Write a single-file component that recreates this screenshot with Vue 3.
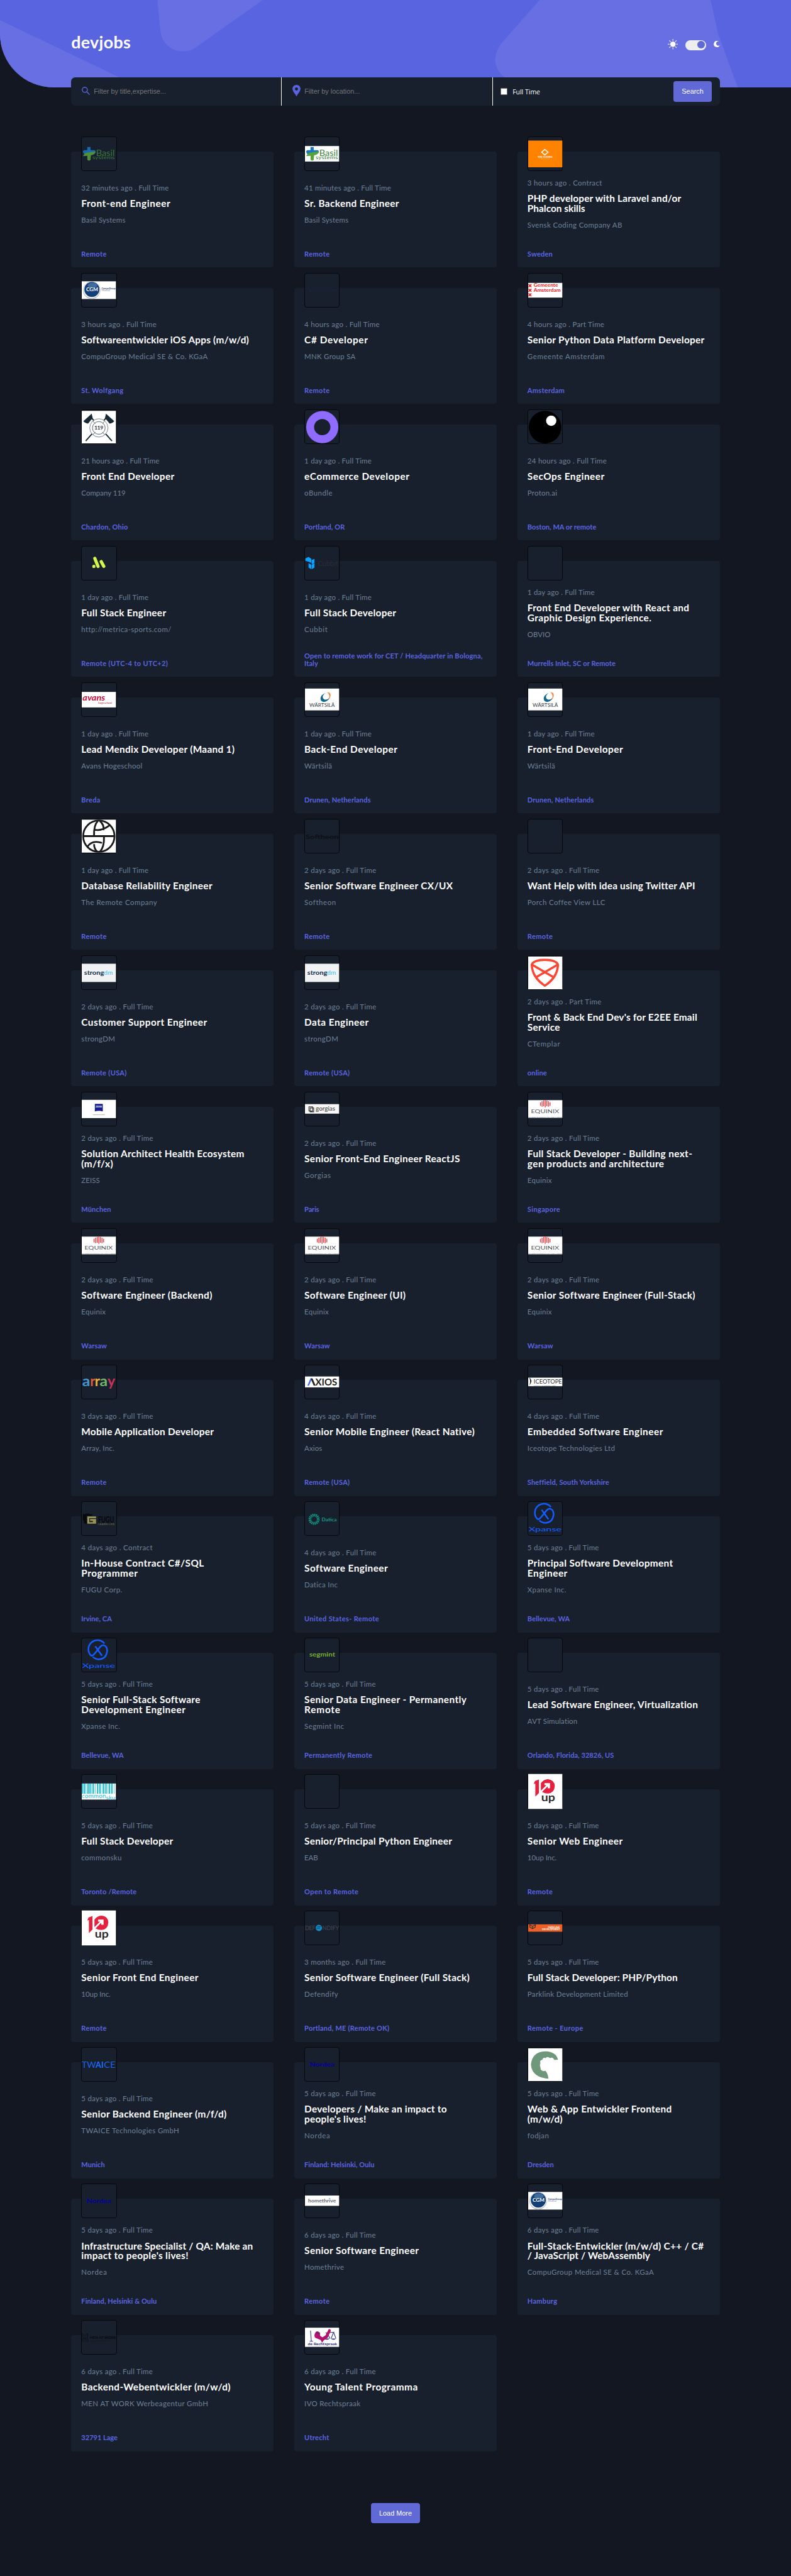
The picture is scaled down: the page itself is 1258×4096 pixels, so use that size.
<script setup>
// Short helpers for the company marks; every mark lives on an 86 x 84 canvas.
const t = (s, x, y, size, w, fill, extra = '') =>
  `<text x="${x}" y="${y}" font-size="${size}" textLength="${w}" lengthAdjust="spacingAndGlyphs" fill="${fill}" ${extra}>${s}</text>`
const r = (y1, y2, fill = '#fff') => `<rect x="0" y="${y1}" width="86" height="${y2 - y1}" fill="${fill}"/>`
const B = 'font-weight="700"'

const basil =
  `<path d="M14 25h8v8h10q3 0 3 4t-3 4H22L8 44q-5-3-5-7 0-3 3-4h8z" fill="#1878c2"/>` +
  `<path d="M3 48q4-9 14-9l17-3q1 8-11 10l-1 12q-4 3-8-1v-10z" fill="#5aa33c"/>` +
  t('Basil', 36, 47, 20, 47, '#3f8442') + t('systems', 27, 56, 12, 56, '#3f8442')
const nordea = t('Nordea', 12, 48, 16, 62, '#0000a0', B)
const strong =
  r(19.6, 65.6, '#f1f2f3') + t('strong', 6, 47, 14, 50, '#0c2f4c', B) + t('dm', 56, 47, 14, 22, '#38bdf0')

const logos = {
  none: '',
  basilDark: `<g opacity=".85">${basil}</g>`,
  basil: r(22.5, 61.5) + basil,
  coding:
    r(8.7, 76, '#ff8200') +
    `<path d="M42 31l8 7-8 7-8-7z" fill="none" stroke="#fff" stroke-width="2.4"/>` +
    t('THE CODING', 24, 51.5, 6, 37, '#fff', B) + t('COMPANY', 32, 55, 2.6, 22, '#ffe2c2'),
  cgm:
    r(19.5, 64) +
    `<circle cx="25" cy="42" r="22" fill="#b9bec4"/><circle cx="25" cy="41" r="20.5" fill="#fff"/><circle cx="25.5" cy="40" r="19" fill="#123f77"/><ellipse cx="27" cy="30" rx="12" ry="7" fill="#5d8ab8" opacity=".6"/>` +
    t('CGM', 11, 44, 11, 30, '#fff', B) + t('CompuGroup', 50, 40, 5.5, 35, '#2c4a78', B) + t('Medical', 50, 45, 5, 21, '#8b939c'),
  mnk: `<path d="M9 38l6 5-6 5" fill="none" stroke="#17294a" stroke-width="1.5"/>` + t('MNK GROUP', 19, 44, 7, 63, '#15233e', B),
  amsterdam:
    r(23.5, 60.5) +
    `<path d="M1 27l7 7m0-7l-7 7M1 38.5l7 7m0-7l-7 7M1 50l7 7m0-7l-7 7" stroke="#ec1c24" stroke-width="2.6"/>` +
    t('Gemeente', 14, 34, 10.5, 61, '#ec1c24', B) + t('Amsterdam', 14, 46, 10.5, 68, '#ec1c24', B),
  axes:
    r(2, 84) +
    `<path d="M23 18L76 78M63 18L10 78" stroke="#172a33" stroke-width="3"/><path d="M25 9L4 28q6 6 12 6l8-10 4-2zM61 9l21 19q-6 6-12 6l-8-10-4-2z" fill="#172a33"/>` +
    `<circle cx="43" cy="45" r="23" fill="#fff" stroke="#555f66" stroke-width="1.2"/><circle cx="43" cy="45" r="16" fill="none" stroke="#555f66" stroke-width="1.5"/><path d="M28 28l6 6m24-6l-6 6M28 62l6-6m24 6l-6-6" stroke="#555f66" stroke-width="1.5"/>` +
    t('119', 32, 49.5, 12, 22, '#172a33', B),
  obundle: `<circle cx="43.5" cy="43" r="30.5" fill="none" stroke="#8f6bff" stroke-width="20"/>`,
  proton: `<circle cx="42.5" cy="43" r="41"/><circle cx="58" cy="27" r="13" fill="#fff"/>`,
  metrica: `<path d="M30.5 50v.1M33 30l8 20M49 38l6.500 12" stroke="#d3f84b" stroke-width="8" stroke-linecap="round"/>`,
  cubbit:
    `<path d="M1 30l8-4 7 5v10l-8-3-7-2zM17 34l7-3v10l-7 4zM9 42l7 4v11l-7-4zM17 46l7-4v11l-7 4z" fill="#0aa0ff"/>` +
    t('Cubbit', 32, 49, 18, 52, '#292c34'),
  avans: r(22.5, 61.5) + t('avans', 2, 44, 21, 57, '#c8103e', B + ' font-style="italic"') + t('hogeschool', 41, 52, 7, 35, '#c8103e', 'font-style="italic"'),
  wartsila:
    r(14, 69) +
    `<path d="M52 25q-12 5-13 14 1 11 12 8 8-2 11-10-5 6-12 5-6-2-5-9 2-5 7-8z" fill="#13668c"/><path d="M56 24q10-2 8 10-1 5-5 9 4-10 1-15-1-3-4-4z" fill="#f58345"/>` +
    t('WÄRTSILÄ', 11, 60.5, 13, 64, '#35393d'),
  globe:
    r(0.5, 83.5) +
    `<g fill="none" stroke="#1a1a1a" stroke-width="4.5"><circle cx="43" cy="42" r="39.5"/><path d="M3 42h80M31 40q-1-25 10-37M45 3q13 12 9 24M30 25q19 6 40-10M56 44q1 25-10 37M31 62q0 12 8 19M15 68q11-17 36-9"/></g>`,
  softheon: t('Softheon', 1, 49, 16, 84, '#0c1118', 'font-weight="900"'),
  strong,
  ctemplar:
    r(1.5, 84) +
    `<path d="M9 22Q14 10 42 10Q70 10 75 22Q74 54 42 75Q10 54 9 22zM10 22L63 53M74 22L21 53" fill="none" stroke="#fa4632" stroke-width="5.5" stroke-linejoin="round"/>`,
  zeiss:
    r(18.7, 64.7) + `<path d="M33 29h20v19q-10-3-20 0z" fill="#141e8c"/>` + t('ZEISS', 35, 38, 5, 16, '#fff', B) + t('Seeing beyond', 28, 57, 4, 30, '#555'),
  gorgias:
    r(29.5, 53.5, '#f7f7f7') +
    `<path d="M10 36h9v11h-9zM13 39h9v10h-9z" fill="none" stroke="#333" stroke-width="1.8"/>` + t('gorgias', 27, 46, 15, 49, '#333'),
  equinix:
    r(19.5, 64) +
    `<path d="M31 25v9M35 22v14M39 20v15M43 19.5v18M47 20v15M51 22v14M55 25v9" stroke="#ed3b3f" stroke-width="2.2"/>` +
    t('EQUINIX', 7, 53, 10.5, 71, '#4e5256') + t('WHERE OPPORTUNITY CONNECTS', 0, 63.5, 3.8, 86, '#777'),
  array:
    t('a', 1, 52, 35, 20, '#4795d2', B) + t('r', 21, 52, 35, 13, '#dd5a3c', B) + t('r', 33, 52, 35, 13, '#edb63b', B) +
    t('a', 45, 52, 35, 20, '#6fb76b', B) + t('y', 65, 52, 35, 19, '#c9325c', B),
  axios: r(28, 55.5) + `<path d="M6 51l8-18h4l-8 18z" fill="#3a6bf0"/><path d="M14 33h5l8 18h-5z" fill="#222"/>` + t('XIOS', 26, 51, 24, 55, '#222', B),
  iceotope:
    r(31, 52.5) + `<path d="M3 31q6 5 5 10t-5 9q2-5 2-9t-2-10z" fill="#222"/>` + t('ICEOTOPE', 14, 46.5, 15, 71, '#333') + t('COOLING REDEFINED', 14, 51.5, 3.8, 55, '#777'),
  fugu:
    `<path d="M3 30l6 2 1-4 4 3 3-3 3 4 6-2v5H12v22l-4-3-3 1 1-6-3-3z" fill="#07090c"/><path d="M14 37h22v4H19v10h9v-3h-7v-5h15v12H14z" fill="#9d9350"/>` +
    t('FUGU', 41, 52, 20, 40, '#07090c', 'font-weight="900"') + t('LEARN LIFE', 41, 59, 4.8, 42, '#777044'),
  datica:
    `<circle cx="23" cy="44" r="10.5" fill="none" stroke="#109a84" stroke-width="7" stroke-dasharray="2.6 1.5"/>` + t('Datica', 42, 48.5, 12, 38, '#109a84', B),
  xpanse:
    `<g fill="none" stroke="#145cff" stroke-width="4"><path d="M57 13A22.5 22.500 0 0 0 22 42Q26 47 33 38L46 22Q51 16 57 18 64 21 64 32 62 52 44 53 34 53 28 47M34 20L51 44"/></g>` +
    t('Xpanse', 1, 75, 14, 83, '#145cff', 'font-weight="500"'),
  segmint: t('segmint', 11, 46, 16, 65, '#79ad35', B),
  commonsku:
    r(22, 62.5) +
    `<path d="M2 22v26M7 22v26M16 22v26M21 22v26M29 22v26M40 22v26M46 22v26M55 22v26M61 22v26M70 22v26M76 22v26" stroke="#25bccf" stroke-width="3.5"/><path d="M11 22v26M25 22v26M34 22v26M51 22v26M66 22v26M82 22v26" stroke="#4fd0de" stroke-width="1.5"/>` +
    t('common', 0, 58.5, 14, 61, '#25bccf') + t('sku', 61, 62, 13, 24, '#25bccf'),
  tenup:
    r(-2, 86) +
    `<path d="M17 16l10-4v34l-9 9V22l-4 1z" fill="#e6203f"/><path d="M32 21q8-10 18-10 16 2 17 17-1 18-17 19-9 0-15-4l14-14v5h6V21H41v5h5L32 40z" fill="#e6203f"/>` +
    t('up', 33, 66, 27, 35, '#2a2a2c', B),
  defendify: `<circle cx="35" cy="42" r="8" fill="#138cc4"/>` + t('DEF', 0, 48, 15, 26, '#444a54') + t('NDIFY', 44, 48, 15, 42, '#444a54') + `<path d="M31 39h9M29 43h9" stroke="#0b4a74" stroke-width="2"/>`,
  parklink:
    r(33, 51.5, '#ee6128') + `<path d="M4 34v6l7 4 7-4v-6l-7 4zM11 38v6" fill="none" stroke="#43312d" stroke-width="2"/>` +
    t('PARKLINK', 50, 42, 6, 30, '#fff', B) + t('DEVELOPMENT', 35, 47.5, 6, 45, '#fff', B),
  twaice: t('TW', 0, 50, 22, 36, '#1b63e8') + t('AI', 35, 50, 22, 20, '#1b70ff', B) + t('CE', 56, 50, 22, 29, '#1b63e8'),
  nordea,
  fodjan:
    r(1.5, 84) +
    `<path d="M43 9q28 1 32 21l-9 1q-4-9-11-5-7-5-11 0-7-2-8 4-8 2-5 9-3 6 0 10-1 7 4 9 5 2 8 0 7 7 8 20Q45 78 33 75 8 66 7 42 10 10 43 9z" fill="#6f987b"/>`,
  homethrive: r(28.5, 54.5) + t('homethrive', 8, 45.5, 13, 70, '#666a70', B) + `<path d="M60 37l2-2 2 2" stroke="#3a9fd8" fill="none"/>`,
  menatwork:
    `<path d="M1 53V32l7 8 7-8v21M5 53V42l3 4 3-4v11" fill="none" stroke="#0b0e13" stroke-width="1.2"/>` + t('MEN AT WORK', 20, 46, 9.5, 66, '#07090d', B) + t('WERBEAGENTUR', 21, 53, 4, 50, '#0e1219'),
  rechtspraak:
    r(17.7, 66) +
    `<path d="M14 25l2 26M12 52h8M52 31l22-2M56 31l-7 14M56 31l7 14M72 29l-6 16M72 29l6 16" stroke="#2d3180" stroke-width="1.7" fill="none"/><path d="M48 45h14q-6 6-14 0zM65 45h13q-6 6-13 0z" fill="#2d3180"/>` +
    `<path d="M60 21q5 0 5 5l-2 4-6 13-10 7-4 6-3-7-9-4q-8-1-7-9 2-10 8-9 7 2 6 11l6 4 8-5 6-12z" fill="#b5126e"/><path d="M28 31h10" stroke="#2d3180" stroke-width="2"/>` +
    t('de Rechtspraak', 7, 62, 9.5, 74, '#2d3180', B),
}

// logo, age, type, title, company, place, then the set widths of meta, title lines, company, place lines
const rows = [
  ['basilDark', '32 minutes ago', 'Full Time', 'Front-end Engineer', 'Basil Systems', 'Remote', 213, [216], 107, [61]],
  ['basil', '41 minutes ago', 'Full Time', 'Sr. Backend Engineer', 'Basil Systems', 'Remote', 211, [230], 107, [61]],
  ['coding', '3 hours ago', 'Contract', 'PHP developer with Laravel and/or\nPhalcon skills', 'Svensk Coding Company AB', 'Sweden', 181, [375, 140], 231, [61]],
  ['cgm', '3 hours ago', 'Full Time', 'Softwareentwickler iOS Apps (m/w/d)', 'CompuGroup Medical SE & Co. KGaA', 'St. Wolfgang', 183, [408], 307, [102]],
  ['mnk', '4 hours ago', 'Full Time', 'C# Developer', 'MNK Group SA', 'Remote', 183, [154], 124, [61]],
  ['amsterdam', '4 hours ago', 'Part Time', 'Senior Python Data Platform Developer', 'Gemeente Amsterdam', 'Amsterdam', 187, [430], 188, [90]],
  ['axes', '21 hours ago', 'Full Time', 'Front End Developer', 'Company 119', 'Chardon, Ohio', 190, [226], 108, [113]],
  ['obundle', '1 day ago', 'Full Time', 'eCommerce Developer', 'oBundle', 'Portland, OR', 164, [255], 68, [98]],
  ['proton', '24 hours ago', 'Full Time', 'SecOps Engineer', 'Proton.ai', 'Boston, MA or remote', 193, [187], 72, [168]],
  ['metrica', '1 day ago', 'Full Time', 'Full Stack Engineer', 'http://metrica-sports.com/', 'Remote (UTC-4 to UTC+2)', 164, [206], 218, [210]],
  ['cubbit', '1 day ago', 'Full Time', 'Full Stack Developer', 'Cubbit', 'Open to remote work for CET / Headquarter in Bologna,\nItaly', 164, [223], 56, [434, 33]],
  ['none', '1 day ago', 'Full Time', 'Front End Developer with React and\nGraphic Design Experience.', 'OBVIO', 'Murrells Inlet, SC or Remote', 164, [394, 301], 56, [214]],
  ['avans', '1 day ago', 'Full Time', 'Lead Mendix Developer (Maand 1)', 'Avans Hogeschool', 'Breda', 164, [373], 148, [46]],
  ['wartsila', '1 day ago', 'Full Time', 'Back-End Developer', 'Wärtsilä', 'Drunen, Netherlands', 164, [226], 67, [161]],
  ['wartsila', '1 day ago', 'Full Time', 'Front-End Developer', 'Wärtsilä', 'Drunen, Netherlands', 164, [232], 67, [161]],
  ['globe', '1 day ago', 'Full Time', 'Database Reliability Engineer', 'The Remote Company', 'Remote', 164, [319], 184, [61]],
  ['softheon', '2 days ago', 'Full Time', 'Senior Software Engineer CX/UX', 'Softheon', 'Remote', 175, [361], 76, [61]],
  ['none', '2 days ago', 'Full Time', 'Want Help with idea using Twitter API', 'Porch Coffee View LLC', 'Remote', 175, [409], 189, [61]],
  ['strong', '2 days ago', 'Full Time', 'Customer Support Engineer', 'strongDM', 'Remote (USA)', 175, [306], 82, [110]],
  ['strong', '2 days ago', 'Full Time', 'Data Engineer', 'strongDM', 'Remote (USA)', 175, [156], 82, [110]],
  ['ctemplar', '2 days ago', 'Part Time', "Front & Back End Dev's for E2EE Email\nService", 'CTemplar', 'online', 180, [413, 79], 79, [47]],
  ['zeiss', '2 days ago', 'Full Time', 'Solution Architect Health Ecosystem\n(m/f/x)', 'ZEISS', 'München', 175, [397, 77], 45, [72]],
  ['gorgias', '2 days ago', 'Full Time', 'Senior Front-End Engineer ReactJS', 'Gorgias', 'Paris', 175, [379], 64, [36]],
  ['equinix', '2 days ago', 'Full Time', 'Full Stack Developer - Building next-\ngen products and architecture', 'Equinix', 'Singapore', 175, [401, 332], 59, [79]],
  ['equinix', '2 days ago', 'Full Time', 'Software Engineer (Backend)', 'Equinix', 'Warsaw', 175, [318], 59, [62]],
  ['equinix', '2 days ago', 'Full Time', 'Software Engineer (UI)', 'Equinix', 'Warsaw', 175, [246], 59, [62]],
  ['equinix', '2 days ago', 'Full Time', 'Senior Software Engineer (Full-Stack)', 'Equinix', 'Warsaw', 175, [408], 59, [62]],
  ['array', '3 days ago', 'Full Time', 'Mobile Application Developer', 'Array, Inc.', 'Remote', 175, [323], 80, [61]],
  ['axios', '4 days ago', 'Full Time', 'Senior Mobile Engineer (React Native)', 'Axios', 'Remote (USA)', 175, [415], 43, [110]],
  ['iceotope', '4 days ago', 'Full Time', 'Embedded Software Engineer', 'Iceotope Technologies Ltd', 'Sheffield, South Yorkshire', 175, [329], 213, [198]],
  ['fugu', '4 days ago', 'Contract', 'In-House Contract C#/SQL\nProgrammer', 'FUGU Corp.', 'Irvine, CA', 173, [298, 137], 99, [74]],
  ['datica', '4 days ago', 'Full Time', 'Software Engineer', 'Datica Inc', 'United States- Remote', 175, [202], 81, [181]],
  ['xpanse', '5 days ago', 'Full Time', 'Principal Software Development\nEngineer', 'Xpanse Inc.', 'Bellevue, WA', 174, [353, 97], 94, [103]],
  ['xpanse', '5 days ago', 'Full Time', 'Senior Full-Stack Software\nDevelopment Engineer', 'Xpanse Inc.', 'Bellevue, WA', 174, [289, 253], 94, [103]],
  ['segmint', '5 days ago', 'Full Time', 'Senior Data Engineer - Permanently\nRemote', 'Segmint Inc', 'Permanently Remote', 174, [395, 87], 96, [165]],
  ['none', '5 days ago', 'Full Time', 'Lead Software Engineer, Virtualization', 'AVT Simulation', 'Orlando, Florida, 32826, US', 174, [415], 122, [210]],
  ['commonsku', '5 days ago', 'Full Time', 'Full Stack Developer', 'commonsku', 'Toronto /Remote', 174, [223], 98, [134]],
  ['none', '5 days ago', 'Full Time', 'Senior/Principal Python Engineer', 'EAB', 'Open to Remote', 174, [359], 33, [131]],
  ['tenup', '5 days ago', 'Full Time', 'Senior Web Engineer', '10up Inc.', 'Remote', 174, [232], 71, [61]],
  ['tenup', '5 days ago', 'Full Time', 'Senior Front End Engineer', '10up Inc.', 'Remote', 174, [285], 71, [61]],
  ['defendify', '3 months ago', 'Full Time', 'Senior Software Engineer (Full Stack)', 'Defendify', 'Portland, ME (Remote OK)', 198, [402], 82, [206]],
  ['parklink', '5 days ago', 'Full Time', 'Full Stack Developer: PHP/Python', 'Parklink Development Limited', 'Remote - Europe', 174, [365], 244, [135]],
  ['twaice', '5 days ago', 'Full Time', 'Senior Backend Engineer (m/f/d)', 'TWAICE Technologies GmbH', 'Munich', 174, [354], 238, [57]],
  ['nordea', '5 days ago', 'Full Time', "Developers / Make an impact to\npeople's lives!", 'Nordea', 'Finland: Helsinki, Oulu', 174, [346, 150], 62, [170]],
  ['fodjan', '5 days ago', 'Full Time', 'Web & App Entwickler Frontend\n(m/w/d)', 'fodjan', 'Dresden', 174, [352, 85], 52, [64]],
  ['nordea', '5 days ago', 'Full Time', "Infrastructure Specialist / QA: Make an\nimpact to people's lives!", 'Nordea', 'Finland, Helsinki & Oulu', 174, [417, 260], 62, [183]],
  ['homethrive', '6 days ago', 'Full Time', 'Senior Software Engineer', 'Homethrive', 'Remote', 174, [278], 96, [61]],
  ['cgm', '6 days ago', 'Full Time', 'Full-Stack-Entwickler (m/w/d) C++ / C#\n/ JavaScript / WebAssembly', 'CompuGroup Medical SE & Co. KGaA', 'Hamburg', 174, [429, 299], 307, [72]],
  ['menatwork', '6 days ago', 'Full Time', 'Backend-Webentwickler (m/w/d)', 'MEN AT WORK Werbeagentur GmbH', '32791 Lage', 174, [363], 310, [88]],
  ['rechtspraak', '6 days ago', 'Full Time', 'Young Talent Programma', 'IVO Rechtspraak', 'Utrecht', 174, [276], 136, [60]],
]

// Tracks a line of text so that it sets to the given width (design pixels).
const ctx = document.createElement('canvas').getContext('2d')
function line(text, width, size, weight) {
  ctx.font = `${weight} 100px Lato, "Open Sans", sans-serif`
  const natural = (ctx.measureText(text).width * size) / 100
  const gap = (width - natural) / (text.length - 1)
  return { text, style: { letterSpacing: `${(gap / 10).toFixed(4)}rem` } }
}
const lines = (text, widths, size, weight) => text.split('\n').map((s, i) => line(s, widths[i], size, weight))

const jobs = rows.map(([logo, age, type, title, company, place, mw, tw, cw, pw]) => ({
  logo,
  meta: line(`${age} . ${type}`, mw, 17.5, 400),
  title: lines(title, tw, 23.5, 700),
  company: line(company, cw, 17.5, 400),
  place: lines(place, pw, 16.8, 700),
}))
</script>

<template>
  <div class="page">
    <header class="header">
      <svg class="shapes" viewBox="0 0 1920 213" preserveAspectRatio="none">
        <path d="M0 49L342 213H0z" />
        <path d="M382 0L389 72C391 103 415 125 443 125C458 125 468 121 477 114L638 0z" />
        <path d="M1310 0L1218 104C1196 132 1196 166 1224 187L1250 213H1791L1743 82L1725 0z" />
      </svg>
      <div class="bar">
        <h1 class="brand">devjobs</h1>
        <div class="theme">
          <svg class="sun" viewBox="0 0 24 24">
            <circle cx="12" cy="12" r="6.2" fill="#fff" />
            <path d="M12 .5v3.200M12 20.300v3.200M.5 12h3.200M20.300 12h3.200M4 4l2.100 2.100M17.900 17.900L20 20M4 20l2.100-2.100M17.900 6.100L20 4" stroke="#fff" stroke-width="1.5" stroke-linecap="round" />
          </svg>
          <span class="toggle"><i></i></span>
          <svg class="moon" viewBox="0 0 15 15">
            <path d="M9.500.2A7.500 7.500 0 1 0 14.800 10.500Q11 13 8 10.500 4.500 7 7 3 8.500 1.200 12.500 1.200 11.500.2 9.500.2z" fill="#fff" />
          </svg>
        </div>
      </div>
    </header>

    <form class="search">
      <label class="field">
        <svg class="glass" viewBox="0 0 20 20">
          <circle cx="7.4" cy="7.4" r="6.2" />
          <path d="M12 12l7.200 7.200" />
        </svg>
        <span>Filter by title,expertise...</span>
      </label>
      <label class="field">
        <svg class="pin" viewBox="0 0 20 28">
          <path d="M10 0C4.500 0 .3 4.300.3 9.600.3 16 6 20 10 28c4-8 9.700-12 9.700-18.400C19.700 4.300 15.500 0 10 0zm0 6a3.800 3.800 0 1 1 0 7.600A3.800 3.800 0 0 1 10 6z" />
        </svg>
        <span>Filter by location...</span>
      </label>
      <div class="field last">
        <i class="check"></i>
        <b>Full Time</b>
        <button type="button" class="btn search-btn">Search</button>
      </div>
    </form>

    <main class="grid">
      <article v-for="(job, i) in jobs" :key="i" class="card">
        <svg class="logo" viewBox="0 0 86 84" v-html="logos[job.logo]"></svg>
        <div class="info">
          <p class="meta" :style="job.meta.style">{{ job.meta.text }}</p>
          <h2><span v-for="l in job.title" :key="l.text" :style="l.style">{{ l.text }}</span></h2>
          <p class="company" :style="job.company.style">{{ job.company.text }}</p>
        </div>
        <p class="place"><span v-for="l in job.place" :key="l.text" :style="l.style">{{ l.text }}</span></p>
      </article>
    </main>

    <div class="more"><button type="button" class="btn more-btn">Load More</button></div>
  </div>
</template>

<style>
/* 1rem is 10px of the 1920px-wide design */
html {
  font-size: calc(100vw / 192);
}
body {
  margin: 0;
  background: #121721;
}
</style>

<style scoped>
.page {
  box-sizing: border-box;
  height: 625rem;
  overflow: hidden;
  background: #121721;
  color: #fff;
  font-family: Lato, 'Open Sans', sans-serif;
}
.header {
  position: relative;
  height: 21.27rem;
  overflow: hidden;
  background: #5964e0;
  border-bottom-left-radius: 13rem;
}
.shapes {
  position: absolute;
  inset: 0;
  width: 100%;
  height: 100%;
  fill: #676fe3;
}
.bar {
  position: relative;
  display: flex;
  justify-content: space-between;
  margin: 0 17.28rem;
}
.brand {
  margin: 7.8rem 0 0;
  font-size: 4.1rem;
  line-height: 5rem;
  font-weight: 700;
  letter-spacing: 0.05rem;
}
.theme {
  display: flex;
  align-items: flex-start;
  padding-top: 9.5rem;
}
.sun {
  width: 2.5rem;
  height: 2.5rem;
}
.toggle {
  box-sizing: border-box;
  display: flex;
  justify-content: flex-end;
  width: 5rem;
  height: 2.5rem;
  margin: 0.2rem 1.9rem 0 1.8rem;
  padding: 0.3rem;
  border-radius: 1.25rem;
  background: #eee;
}
.toggle i {
  width: 1.8rem;
  height: 1.75rem;
  border-radius: 50%;
  background: #6069d6;
}
.moon {
  width: 1.5rem;
  height: 1.5rem;
  margin-top: 0.4rem;
}
.search {
  position: relative;
  display: flex;
  height: 7rem;
  margin: -2.57rem 17.28rem 0;
  border-radius: 1rem;
  background: #19202d;
  font-family: 'Liberation Sans', Arial, sans-serif;
  font-size: 1.66rem;
}
.field {
  box-sizing: border-box;
  display: flex;
  align-items: center;
  width: 32.5%;
  padding-left: 2.5rem;
  border-right: 1px solid #fff;
  color: #757575;
}
.field.last {
  flex: 1;
  padding: 0 2rem 0 1.9rem;
  border: 0;
}
.glass {
  width: 2rem;
  height: 2rem;
  margin: -0.2rem 1rem 0 0;
  fill: none;
  stroke: #5964e0;
  stroke-width: 2.2;
}
.pin {
  width: 2rem;
  height: 2.8rem;
  margin: -0.5rem 0.95rem 0 0;
  fill: #5964e0;
}
.check {
  box-sizing: border-box;
  width: 1.6rem;
  height: 1.6rem;
  border: 1px solid #767676;
  border-radius: 0.2rem;
  background: #fff;
}
.field b {
  margin: 0.3rem auto 0 1.3rem;
  color: #fff;
  font: 500 1.6rem 'Open Sans', sans-serif;
}
.btn {
  height: 5rem;
  padding: 0;
  border: 0;
  border-radius: 0.6rem;
  background: #6069d6;
  color: #fff;
  font: 400 1.66rem 'Liberation Sans', Arial, sans-serif;
}
.search-btn {
  width: 9.2rem;
}
.more-btn {
  width: 12rem;
}
.grid {
  display: grid;
  grid-template-columns: repeat(3, 1fr);
  grid-auto-rows: 28.125rem;
  gap: 5rem;
  margin: 11.1rem 17.28rem 0;
}
.card {
  position: relative;
  box-sizing: border-box;
  display: flex;
  flex-direction: column;
  padding: 4rem 2.46rem 2.4rem;
  border-radius: 0.6rem;
  background: #19202d;
}
.logo {
  position: absolute;
  top: -3.68rem;
  left: 2.46rem;
  box-sizing: border-box;
  width: 8.6rem;
  height: 8.4rem;
  overflow: visible;
  border: 1px solid #05070a;
  border-radius: 0.6rem;
  background: #19202d;
}
.info {
  display: flex;
  flex: none;
  flex-direction: column;
  justify-content: center;
  height: 17.3rem;
}
.card p,
.card h2 {
  margin: 0;
  white-space: pre;
}
.card span {
  display: block;
}
.meta,
.company {
  color: #6e8098;
  font-size: 1.75rem;
  line-height: 2rem;
}
.card h2 {
  margin: 1.7rem 0;
  font-size: 2.35rem;
  line-height: 2.4rem;
  font-weight: 700;
}
.card .place {
  margin-top: auto;
  color: #5964e0;
  font-size: 1.68rem;
  line-height: 1.8rem;
  font-weight: 700;
}
.more {
  display: flex;
  justify-content: center;
  margin-top: 12.5rem;
}
</style>
